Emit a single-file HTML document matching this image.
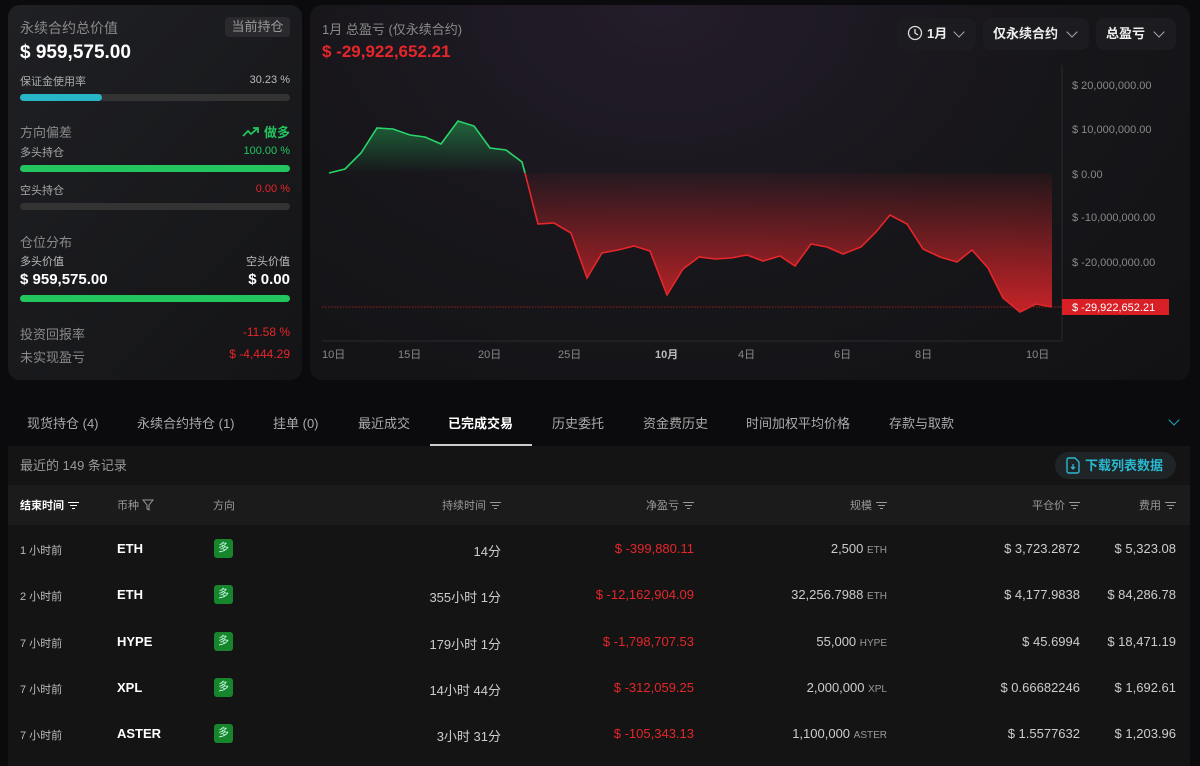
<!DOCTYPE html>
<html><head><meta charset="utf-8"><style>
*{margin:0;padding:0;box-sizing:border-box}
body{width:1200px;height:760px;overflow:hidden;background:#0b0b0d;font-family:"Liberation Sans","Noto Sans CJK SC",sans-serif;color:#e8e8e8;position:relative}
.a{position:absolute;white-space:nowrap}
.g{color:#8a8a8a}
.card{position:absolute;border-radius:12px}
.bar{position:absolute;height:7px;border-radius:4px;background:#333}
.r{text-align:right}
.red{color:#e5262b}
.grn{color:#22c55e}
.btn{position:absolute;top:18px;height:32px;background:#1c1c20;border-radius:8px;font-size:13px;font-weight:bold;color:#eee;line-height:32px;padding-left:10px}
.chev{position:absolute;top:10px;width:8px;height:8px;border-right:1.3px solid #aaa;border-bottom:1.3px solid #aaa;transform:rotate(45deg)}
.tab{position:absolute;top:413px;font-size:13px;color:#aaa}
.th{position:absolute;top:497px;font-size:11px;color:#999}
.cell{position:absolute;font-size:13px;top:0}
.tag{position:absolute;left:214px;width:19px;height:19px;background:#17852b;border-radius:3px;color:#cfe;font-size:11px;text-align:center;line-height:19px}
.u{color:#999;font-size:10px}
.t{left:20px;top:1px;font-size:11px;color:#bbb}
.fi{display:inline-block;width:11px;height:8px;vertical-align:middle;margin-left:4px;background:linear-gradient(#999,#999) 0 0/11px 1px no-repeat,linear-gradient(#999,#999) 2px 3px/7px 1px no-repeat,linear-gradient(#999,#999) 4px 6px/3px 1px no-repeat}
</style></head><body>
<div class="card" style="left:8px;top:5px;width:294px;height:375px;background:linear-gradient(135deg,#1f2024,#141416)"></div>
<div class="a g" style="left:20px;top:18px;font-size:14px">永续合约总价值</div>
<div class="a" style="left:225px;top:17px;width:65px;height:20px;background:#2a2a2e;border-radius:4px;font-size:13px;color:#999;text-align:center;line-height:20px">当前持仓</div>
<div class="a" style="left:20px;top:42px;font-size:19px;font-weight:bold;color:#fff">$ 959,575.00</div>
<div class="a" style="left:20px;top:73px;font-size:11px;color:#aaa">保证金使用率</div>
<div class="a r" style="right:910px;top:74px;font-size:11px;color:#bbb">30.23 %</div>
<div class="bar" style="left:20px;top:94px;width:270px"></div>
<div class="bar" style="left:20px;top:94px;width:82px;background:#27b5c8"></div>
<div class="a g" style="left:20px;top:122px;font-size:13px">方向偏差</div>
<div class="a grn" style="right:910px;top:122px;font-size:13px;font-weight:bold"><svg width="18" height="12" viewBox="0 0 18 12" style="vertical-align:-1px;margin-right:4px"><path d="M1 10 L6 5 L9 8 L16 2 M11 2 H16 V7" stroke="#22c55e" stroke-width="1.8" fill="none"/></svg>做多</div>
<div class="a" style="left:20px;top:144px;font-size:11px;color:#aaa">多头持仓</div>
<div class="a grn" style="right:910px;top:145px;font-size:11px">100.00 %</div>
<div class="bar" style="left:20px;top:165px;width:270px;background:#22c55e"></div>
<div class="a" style="left:20px;top:182px;font-size:11px;color:#aaa">空头持仓</div>
<div class="a red" style="right:910px;top:183px;font-size:11px">0.00 %</div>
<div class="bar" style="left:20px;top:203px;width:270px"></div>
<div class="a g" style="left:20px;top:232px;font-size:13px">仓位分布</div>
<div class="a" style="left:20px;top:253px;font-size:11px;color:#bbb">多头价值</div>
<div class="a" style="right:910px;top:253px;font-size:11px;color:#bbb">空头价值</div>
<div class="a" style="left:20px;top:271px;font-size:15px;font-weight:bold;color:#fff">$ 959,575.00</div>
<div class="a" style="right:910px;top:271px;font-size:15px;font-weight:bold;color:#fff">$ 0.00</div>
<div class="bar" style="left:20px;top:295px;width:270px;background:#22c55e"></div>
<div class="a g" style="left:20px;top:324px;font-size:13px">投资回报率</div>
<div class="a red" style="right:910px;top:325px;font-size:12px">-11.58 %</div>
<div class="a g" style="left:20px;top:347px;font-size:13px">未实现盈亏</div>
<div class="a red" style="right:910px;top:347px;font-size:12px">$ -4,444.29</div>

<div class="card" style="left:310px;top:5px;width:880px;height:375px;background:radial-gradient(ellipse at 40% 0%,#241c2a 0%,#17161a 50%,#121214 100%)"></div>
<div class="a g" style="left:322px;top:19px;font-size:13px">1月 总盈亏 (仅永续合约)</div>
<div class="a red" style="left:322px;top:42px;font-size:17px;font-weight:bold">$ -29,922,652.21</div>
<div class="btn" style="left:897px;width:79px"><svg width="16" height="16" viewBox="0 0 16 16" style="vertical-align:-3px;margin-right:4px"><circle cx="8" cy="8" r="6.5" stroke="#ddd" stroke-width="1.3" fill="none"/><path d="M8 4V8L11 10" stroke="#ddd" stroke-width="1.3" fill="none"/></svg>1月<span class="chev" style="left:58px"></span></div>
<div class="btn" style="left:983px;width:106px">仅永续合约<span class="chev" style="left:85px"></span></div>
<div class="btn" style="left:1096px;width:80px">总盈亏<span class="chev" style="left:59px"></span></div>
<svg class="a" style="left:0;top:0" width="1200" height="380">
<defs>
<linearGradient id="gg" x1="0" y1="121" x2="0" y2="173" gradientUnits="userSpaceOnUse"><stop offset="0" stop-color="#22c55e" stop-opacity=".45"/><stop offset="1" stop-color="#22c55e" stop-opacity="0"/></linearGradient>
<linearGradient id="rg" x1="0" y1="173" x2="0" y2="312" gradientUnits="userSpaceOnUse"><stop offset="0" stop-color="#e5262b" stop-opacity="0.05"/><stop offset="1" stop-color="#e5262b" stop-opacity=".85"/></linearGradient>
</defs>
<path d="M329 173 L345 169 L361 153 L377 128 L393 129 L410 135 L425 137 L441 144 L458 121 L474 126 L490 148 L506 150 L522 162 L525 173 Z" fill="url(#gg)"/>
<path d="M525 173 L538 224 L554 223 L571 233 L587 278 L602 253 L618 250 L634 246 L650 251 L667 295 L683 269 L699 257 L715 259 L731 258 L747 255 L763 261 L780 256 L795 266 L811 244 L827 247 L843 254 L861 247 L876 232 L890 215 L907 224 L923 249 L940 257 L957 262 L972 250 L988 268 L1003 298 L1020 312 L1036 304 L1052 307 L1052 173 Z" fill="url(#rg)"/>
<path d="M329 173 L345 169 L361 153 L377 128 L393 129 L410 135 L425 137 L441 144 L458 121 L474 126 L490 148 L506 150 L522 162 L525 173" stroke="#2bd46b" stroke-width="1.6" fill="none"/>
<path d="M525 173 L538 224 L554 223 L571 233 L587 278 L602 253 L618 250 L634 246 L650 251 L667 295 L683 269 L699 257 L715 259 L731 258 L747 255 L763 261 L780 256 L795 266 L811 244 L827 247 L843 254 L861 247 L876 232 L890 215 L907 224 L923 249 L940 257 L957 262 L972 250 L988 268 L1003 298 L1020 312 L1036 304 L1052 307" stroke="#e5262b" stroke-width="1.6" fill="none"/>
<line x1="322" y1="307" x2="1062" y2="307" stroke="#a02020" stroke-width="1" stroke-dasharray="1.5 1.5"/>
<line x1="322" y1="341" x2="1062" y2="341" stroke="#2a2a2e"/>
<line x1="1062" y1="65" x2="1062" y2="341" stroke="#2a2a2e"/>
<rect x="1062" y="299" width="107" height="16" fill="#d91f26"/>
<g font-size="11" fill="#888" font-family="Liberation Sans,Noto Sans CJK SC,sans-serif">
<text x="1072" y="89">$ 20,000,000.00</text>
<text x="1072" y="133">$ 10,000,000.00</text>
<text x="1072" y="178">$ 0.00</text>
<text x="1072" y="221">$ -10,000,000.00</text>
<text x="1072" y="266">$ -20,000,000.00</text>
<text x="1072" y="311" fill="#fff">$ -29,922,652.21</text>
<text x="322" y="358">10日</text><text x="398" y="358">15日</text><text x="478" y="358">20日</text><text x="558" y="358">25日</text>
<text x="655" y="358" fill="#bbb" font-weight="bold">10月</text><text x="738" y="358">4日</text><text x="834" y="358">6日</text><text x="915" y="358">8日</text><text x="1026" y="358">10日</text>
</g>
</svg>

<div class="tab" style="left:27px">现货持仓 (4)</div>
<div class="tab" style="left:137px">永续合约持仓 (1)</div>
<div class="tab" style="left:273px">挂单 (0)</div>
<div class="tab" style="left:358px">最近成交</div>
<div class="tab" style="left:448px;color:#fff;font-weight:bold">已完成交易</div>
<div class="a" style="left:430px;top:444px;width:102px;height:2px;background:#ccc"></div>
<div class="tab" style="left:552px">历史委托</div>
<div class="tab" style="left:643px">资金费历史</div>
<div class="tab" style="left:746px">时间加权平均价格</div>
<div class="tab" style="left:889px">存款与取款</div>
<div class="a" style="left:1170px;top:416px;width:8px;height:8px;border-right:1.3px solid #2aa8c0;border-bottom:1.3px solid #2aa8c0;transform:rotate(45deg)"></div>

<div class="a" style="left:8px;top:446px;width:1182px;height:320px;background:#141414"></div>
<div class="a" style="left:20px;top:455px;font-size:13px;color:#999">最近的 149 条记录</div>
<div class="a" style="left:1055px;top:452px;width:121px;height:27px;background:#1f2426;border-radius:14px;color:#2ab8d0;font-size:13px;font-weight:bold;line-height:27px;padding-left:10px"><svg width="16" height="17" viewBox="0 0 16 17" style="vertical-align:-4px;margin-right:4px"><path d="M2 3 Q2 1 4 1 H10 L14 5 V14 Q14 16 12 16 H4 Q2 16 2 14 Z" stroke="#2ab8d0" stroke-width="1.4" fill="none"/><path d="M8 7 V12 M6 10 L8 12 L10 10" stroke="#2ab8d0" stroke-width="1.3" fill="none"/></svg>下载列表数据</div>
<div class="a" style="left:8px;top:485px;width:1182px;height:40px;background:#1b1b1c"></div>
<div class="th" style="left:20px;color:#fff;font-weight:bold">结束时间<span class="fi" style="filter:brightness(2)"></span></div>
<div class="th" style="left:117px">币种 <svg width="12" height="12" viewBox="0 0 12 12" style="vertical-align:-2px"><path d="M1 1 H11 L7 6 V11 L5 10 V6 Z" stroke="#999" fill="none"/></svg></div>
<div class="th" style="left:213px">方向</div>
<div class="th r" style="right:699px">持续时间<span class="fi"></span></div>
<div class="th r" style="right:506px">净盈亏<span class="fi"></span></div>
<div class="th r" style="right:313px">规模<span class="fi"></span></div>
<div class="th r" style="right:120px">平仓价<span class="fi"></span></div>
<div class="th r" style="right:24px">费用<span class="fi"></span></div>

<div style="position:absolute;left:0;top:541px;width:1200px">
<div class="cell t">1 小时前</div><div class="cell" style="left:117px;font-weight:bold;color:#fff">ETH</div><div class="tag" style="top:-2px">多</div>
<div class="cell" style="right:699px;color:#ccc">14分</div><div class="cell red" style="right:506px">$ -399,880.11</div><div class="cell" style="right:313px;color:#ccc">2,500 <span class="u">ETH</span></div><div class="cell" style="right:120px;color:#ccc">$ 3,723.2872</div><div class="cell" style="right:24px;color:#ccc">$ 5,323.08</div>
</div>
<div style="position:absolute;left:0;top:587px;width:1200px">
<div class="cell t">2 小时前</div><div class="cell" style="left:117px;font-weight:bold;color:#fff">ETH</div><div class="tag" style="top:-2px">多</div>
<div class="cell" style="right:699px;color:#ccc">355小时 1分</div><div class="cell red" style="right:506px">$ -12,162,904.09</div><div class="cell" style="right:313px;color:#ccc">32,256.7988 <span class="u">ETH</span></div><div class="cell" style="right:120px;color:#ccc">$ 4,177.9838</div><div class="cell" style="right:24px;color:#ccc">$ 84,286.78</div>
</div>
<div style="position:absolute;left:0;top:634px;width:1200px">
<div class="cell t">7 小时前</div><div class="cell" style="left:117px;font-weight:bold;color:#fff">HYPE</div><div class="tag" style="top:-2px">多</div>
<div class="cell" style="right:699px;color:#ccc">179小时 1分</div><div class="cell red" style="right:506px">$ -1,798,707.53</div><div class="cell" style="right:313px;color:#ccc">55,000 <span class="u">HYPE</span></div><div class="cell" style="right:120px;color:#ccc">$ 45.6994</div><div class="cell" style="right:24px;color:#ccc">$ 18,471.19</div>
</div>
<div style="position:absolute;left:0;top:680px;width:1200px">
<div class="cell t">7 小时前</div><div class="cell" style="left:117px;font-weight:bold;color:#fff">XPL</div><div class="tag" style="top:-2px">多</div>
<div class="cell" style="right:699px;color:#ccc">14小时 44分</div><div class="cell red" style="right:506px">$ -312,059.25</div><div class="cell" style="right:313px;color:#ccc">2,000,000 <span class="u">XPL</span></div><div class="cell" style="right:120px;color:#ccc">$ 0.66682246</div><div class="cell" style="right:24px;color:#ccc">$ 1,692.61</div>
</div>
<div style="position:absolute;left:0;top:726px;width:1200px">
<div class="cell t">7 小时前</div><div class="cell" style="left:117px;font-weight:bold;color:#fff">ASTER</div><div class="tag" style="top:-2px">多</div>
<div class="cell" style="right:699px;color:#ccc">3小时 31分</div><div class="cell red" style="right:506px">$ -105,343.13</div><div class="cell" style="right:313px;color:#ccc">1,100,000 <span class="u">ASTER</span></div><div class="cell" style="right:120px;color:#ccc">$ 1.5577632</div><div class="cell" style="right:24px;color:#ccc">$ 1,203.96</div>
</div>
</body></html>
